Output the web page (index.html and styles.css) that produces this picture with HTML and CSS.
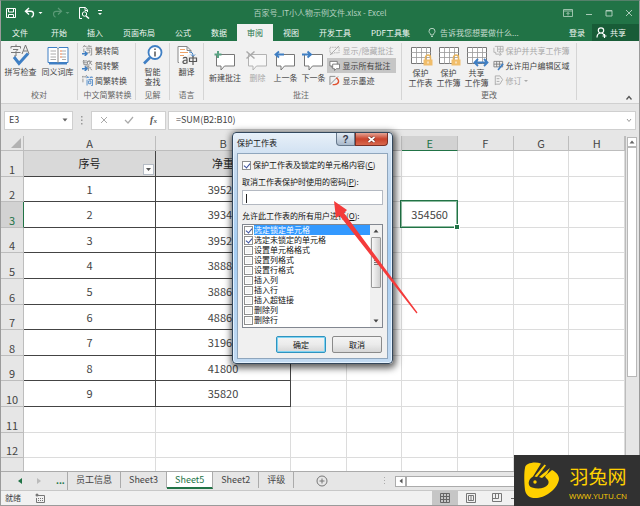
FILE: index.html
```html
<!DOCTYPE html>
<html lang="zh-CN">
<head>
<meta charset="utf-8">
<title>百家号_IT小人物示例文件.xlsx - Excel</title>
<link rel="stylesheet" href="styles.css">
</head>
<body>
<svg class="defs" aria-hidden="true">
  <symbol id="bubble" viewBox="0 0 24 22"><path d="M3.500 4.500h18v11.500h-10l-3.500 4v-4h-4.500z" fill="#fff" stroke="#777"/></symbol>
  <symbol id="sheet" viewBox="0 0 24 22"><path d="M2.500 2.500h19v16h-19z" fill="#fff" stroke="#777"/><path d="M2 7.500h20M2 12.500h20M7.500 2v17M12.500 2v17M17.500 2v17" stroke="#999" stroke-width=".8"/></symbol>
  <symbol id="lock" viewBox="0 0 10 12"><path d="M2.500 6V3.500a2.500 2.500 0 0 1 5 0V6" fill="none" stroke="#e8b45c" stroke-width="1.500"/><path d="M.5 5.500h9v6h-9z" fill="#f0bd6a"/><path d="M5 7.500v2" stroke="#fff"/></symbol>
</svg>
<div class="window">
  <header class="titlebar">
    <div class="quick">
      <button aria-label="保存"><svg width="12" height="12" viewBox="0 0 12 12" fill="none" stroke="#fff"><path d="M1.500 1.500h9v9h-9zM3.500 1.500v3.500h5V1.500M3.500 10.500V7.500h5v3"/></svg></button>
      <button aria-label="撤消"><svg width="20" height="12" viewBox="0 0 20 12" fill="none" stroke="#fff" stroke-width="1.400"><path d="M5 1 1.500 4.300 5 7.500M2 4.300h5c3 0 3.500 4.500.5 6"/><path d="M14.500 5h4l-2 2z" fill="#fff" stroke="none"/></svg></button>
      <button aria-label="恢复" disabled><svg width="20" height="12" viewBox="0 0 20 12" fill="none" stroke="#5b9a77" stroke-width="1.200"><path d="M7 1l3.500 3.300L7 7.500M10 4.300H5c-3 0-3.500 4.500-.5 6"/><path d="M14.500 5h4l-2 2z" fill="#5b9a77" stroke="none"/></svg></button>
      <button aria-label="打印预览"><svg width="12" height="12" viewBox="0 0 12 12" fill="none" stroke="#fff"><path d="M4 11.500H1.500v-11h6l2 2.500v2M7 1v2.500h2"/><circle cx="6.500" cy="7" r="2.200"/><path d="M8 9l3 2.500" stroke-width="1.500"/></svg></button>
      <button aria-label="自定义快速访问工具栏"><svg width="6" height="6" viewBox="0 0 6 6" fill="#fff"><path d="M1 0h4v1H1zM1 3h4L3 5z"/></svg></button>
    </div>
    <h1 class="title">百家号_IT小人物示例文件.xlsx - Excel</h1>
    <div class="winbuttons">
      <button aria-label="功能区显示选项"><svg width="10" height="8" viewBox="0 0 10 8" fill="none" stroke="#a9cbb7" stroke-width=".9"><path d="M.5.5h9v7h-9zM.5 2h9M5 6.500V3.500M3.500 5 5 3.500 6.500 5"/></svg></button>
      <button aria-label="最小化"><svg width="8" height="8" viewBox="0 0 8 8" stroke="#a9cbb7"><path d="M1 5.500h6"/></svg></button>
      <button aria-label="最大化"><svg width="8" height="8" viewBox="0 0 8 8" fill="none" stroke="#a9cbb7"><path d="M1 1.500h6v5.500H1zM1 2h6"/></svg></button>
      <button aria-label="关闭"><svg width="8" height="8" viewBox="0 0 8 8" stroke="#a9cbb7"><path d="m1 1 6 6M7 1 1 7"/></svg></button>
    </div>
  </header>
  <nav class="tabs">
    <button class="file">文件</button><button>开始</button><button>插入</button><button>页面布局</button><button>公式</button><button>数据</button><button class="active">审阅</button><button>视图</button><button>开发工具</button><button>PDF工具集</button>
    <button class="tell"><svg width="8" height="10" viewBox="0 0 8 10" fill="none" stroke="#c5dccf" stroke-width=".9"><path d="M2.800 7C2.800 5.500 1 5 1 3.300a3 3 0 0 1 6 0C7 5 5.200 5.500 5.200 7zM3 8.500h2"/></svg>告诉我您想要做什么...</button>
    <button class="login">登录</button>
    <button class="share"><svg width="11" height="11" viewBox="0 0 11 11" fill="none" stroke="#fff" stroke-width="1.200"><circle cx="5" cy="3.500" r="2.700"/><path d="M1 10.500c0-2.500 1-4 3-4.500M6 6c1 .5 1.500 1 2 2M8.500 7v4M6.500 9h4"/></svg>共享</button>
  </nav>

  <section class="ribbon" aria-label="审阅">
    <div class="group proof">
      <div class="tools">
        <button class="big wide"><svg viewBox="0 0 24 22"><g fill="none" stroke="#777"><path d="M7 .5v2M2 4.500v-2h9.500v2M4 5.500h5L7 7.500v4.500H5M2 8.500h9.500"/><path d="m13 10 3.500-9L20 10M14.500 7h4"/></g><path d="m5 13 5 6.500 9-10" fill="none" stroke="#3f7fc4" stroke-width="3"/></svg>拼写检查</button>
        <button class="big wide"><svg viewBox="0 0 24 22"><path d="M2 3.500h9l1 1 1-1h9v15H2z" fill="#fff" stroke="#3f7fc4"/><path d="M3 19.500h18" stroke="#3f7fc4" stroke-width="2"/><path d="M12 4v15" stroke="#888"/><path d="M4.500 7H10M4.500 10H10M4.500 13H10M4.500 15.500H10M16 7h4M16 10h4M16 13h4M16 15.500h4" stroke="#aaa"/><path d="M14 7h2M14 10h2M14 13h2" stroke="#e77c4b"/></svg>同义词库</button>
      </div>
      <h2>校对</h2>
    </div>
    <div class="group convert">
      <div class="tools small">
        <button><svg viewBox="0 0 12 12" fill="none" stroke="#888" stroke-width=".9"><path d="M3 0 1 2.500M2.500 1.500H5M8 0 6 2.500M7.500 1.500h3M2 4v4M4.500 3.500h6V11H9M5 5.500h3.500v3H5"/><path d="M0 9.500h5M3 7l2.500 2.500L3 12" stroke="#3f7fc4" stroke-width="1.600"/></svg>繁转简</button>
        <button><svg viewBox="0 0 12 12" fill="none" stroke="#888" stroke-width=".9"><path d="M2 0 1 1.500M1.500 1h4M1 3h5M2 1v4h4V1M8 0 7 2M7 1.500h4M8 2l3 3.500M10 2 7 5.500M3 6.500h5L4 8.500h6M7 8.500V12M9 9.500l2 1.500"/><path d="M0 9.500h5M3 7l2.500 2.500L3 12" stroke="#3f7fc4" stroke-width="1.600"/></svg>简转繁</button>
        <button><svg viewBox="0 0 12 12" fill="none" stroke="#888" stroke-width=".9"><path d="M1 1 0 3M1 2h3M5 0 4 2.500M1 4v4"/><path d="M6 1.500 5 3.500M5.500 2.500H8M10 1.500 9 3.500M9.500 2.500H12M5.500 5v6.500M7 5h4.500v6.500H10M7.200 6.500h2.500v3H7.200z" stroke="#3f7fc4"/></svg>简繁转换</button>
      </div>
      <h2>中文简繁转换</h2>
    </div>
    <div class="group narrow">
      <div class="tools"><button class="big"><svg viewBox="0 0 24 22"><circle cx="14" cy="8.500" r="6.500" fill="#fff" stroke="#3f7fc4" stroke-width="1.800"/><path d="m9 13.500-6 6" stroke="#3f7fc4" stroke-width="2.600"/><path d="M14 4.500v1.500M14 7.500v5" stroke="#555" stroke-width="1.500"/></svg>智能<br>查找</button></div>
      <h2>见解</h2>
    </div>
    <div class="group narrow">
      <div class="tools"><button class="big"><svg viewBox="0 0 24 22"><path d="M4 18.500H3v-16h9l4 4v2M12 2.500v4h4" fill="#fff" stroke="#888"/><path d="M5 5.500h5M5 8.500h8M5 11.500h4" stroke="#eda36a"/><path d="M14 8c3 0 4 1 4 4m-2-1.500 2 2 2-2" fill="none" stroke="#3f7fc4"/><path d="M8 14.500c1-1.500 4-1.500 4 .5v4.500m0-3.500c-5 0-5 3.500-2 3.500 1.200 0 2-.8 2-1.500M14.500 14h7v3.500h-7zM18 12v9" fill="none" stroke="#555" stroke-width="1.200"/></svg>翻译</button></div>
      <h2>语言</h2>
    </div>
    <div class="group comments">
      <div class="tools">
        <button class="big wide"><svg viewBox="0 0 24 22"><use href="#bubble"/><path d="M5 1v7M1.500 4.500h7" stroke="#5aa383" stroke-width="2"/></svg>新建批注</button>
        <button class="big" disabled><svg viewBox="0 0 24 22"><use href="#bubble" opacity=".5"/><path d="m1.500 1.500 8 7m0-7-8 7" stroke="#aaa" stroke-width="1.500"/></svg>删除</button>
        <button class="big"><svg viewBox="0 0 24 22"><use href="#bubble"/><path d="M11 4.500H3M6 1.500l-3.500 3L6 7.500" fill="none" stroke="#3f7fc4" stroke-width="1.800"/></svg>上一条</button>
        <button class="big"><svg viewBox="0 0 24 22"><use href="#bubble"/><path d="M1 4.500h8M6.500 1.500l3.500 3-3.500 3" fill="none" stroke="#3f7fc4" stroke-width="1.800"/></svg>下一条</button>
        <div class="small">
          <button disabled><svg viewBox="0 0 12 12" fill="none" stroke="#aaa"><path d="M1 2.500h10v6H5L3 10.500v-2H1z" stroke-dasharray="1.500 1"/><path d="m1 11 10-10"/></svg>显示/隐藏批注</button>
          <button class="on" aria-pressed="true"><svg viewBox="0 0 12 12" fill="#fff" stroke="#777"><path d="M1 1.500h8v5H5L3 8V6.500H1z"/><path d="M4 4.500h7.500v5H8l-2 2v-2H4z"/></svg>显示所有批注</button>
          <button><svg viewBox="0 0 12 12" fill="none" stroke="#888"><path d="M1 10.500v-9h6M1 10.500l9-9"/><path d="M8 3c4 3 3 7-2 7.500H4" stroke="#e0502f" stroke-width="1.500"/></svg>显示墨迹</button>
        </div>
      </div>
      <h2>批注</h2>
    </div>
    <div class="group changes">
      <div class="tools">
        <button class="big"><svg viewBox="0 0 24 22"><use href="#sheet"/><use href="#lock" x="14" y="9" width="10" height="12"/></svg>保护<br>工作表</button>
        <button class="big"><svg viewBox="0 0 24 22"><use href="#sheet"/><use href="#lock" x="14" y="9" width="10" height="12"/></svg>保护<br>工作簿</button>
        <button class="big"><svg viewBox="0 0 24 22"><use href="#sheet"/><path d="M10 17.500h12M13 14l-3.500 3.500L13 21M19 14l3.500 3.500L19 21" fill="none" stroke="#3f7fc4" stroke-width="1.800"/></svg>共享<br>工作簿</button>
        <div class="small">
          <button disabled><svg viewBox="0 0 12 12" fill="none" stroke="#aaa" stroke-width=".9"><path d="M2 1.500h9v6H6M5 1.500v6M8 1.500v6M5 4.500h6M1 3v5h2v2h6M7 8l2 2-2 2"/></svg>保护并共享工作簿</button>
          <button><svg viewBox="0 0 12 12" fill="none" stroke="#777" stroke-width=".9"><path d="M1 1.500h9.500v6H1zM1 4.500h9.500M4 1.500v6M7 1.500v6"/><path d="m5.500 11 5.500-7" stroke="#3f7fc4" stroke-width="1.800"/></svg>允许用户编辑区域</button>
          <button disabled><svg viewBox="0 0 12 12" fill="none" stroke="#aaa"><path d="M2.500 11V1h5l3 4-3 5h-5M4 4h3M4 7h3"/></svg>修订 <svg class="caret" viewBox="0 0 4 4" fill="#aaa"><path d="M0 1h4L2 3z"/></svg></button>
        </div>
      </div>
      <h2>更改</h2>
    </div>
    <button class="collapse" aria-label="折叠功能区"><svg width="8" height="6" viewBox="0 0 8 6" fill="none" stroke="#555" stroke-width="1.300"><path d="m1.500 4.500 2.500-3 2.500 3"/></svg></button>
  </section>

  <div class="formulabar">
    <div class="namebox"><input aria-label="名称框" value="E3"><svg width="6" height="4" viewBox="0 0 6 4" fill="#666"><path d="M.5.5h5L3 3.500z"/></svg></div>
    <svg class="dots" width="2" height="10" viewBox="0 0 2 10" fill="#999"><path d="M0 1h1.500v1.500H0zM0 4.500h1.500V6H0zM0 8h1.500v1.500H0z"/></svg>
    <div class="fx">
      <button aria-label="取消"><svg width="8" height="8" viewBox="0 0 8 8" stroke="#aaa"><path d="m1 1 6 6M7 1 1 7"/></svg></button>
      <button aria-label="输入"><svg width="10" height="8" viewBox="0 0 10 8" fill="none" stroke="#aaa" stroke-width="1.200"><path d="m1 4 3 3 5-6"/></svg></button>
      <button aria-label="插入函数" class="fn">f<small>x</small></button>
    </div>
    <div class="formula"><input aria-label="编辑栏" value="=SUM(B2:B10)"><svg width="6" height="5" viewBox="0 0 6 5" fill="none" stroke="#999"><path d="m1 1 2 2.500L5 1"/></svg></div>
  </div>

  <main class="sheet">
    <div class="cells">
      <table>
        <colgroup><col class="c-row"><col class="c-a"><col class="c-b"><col><col><col><col><col><col></colgroup>
        <thead><tr><th class="corner"><svg width="10" height="10" viewBox="0 0 10 10"><path d="M10 0v10H0z" fill="#b2b2b2"/></svg></th><th>A</th><th>B</th><th>C</th><th>D</th><th class="sel">E</th><th>F</th><th>G</th><th>H</th></tr></thead>
        <tbody>
          <tr class="data head"><th>1</th><td>序号<button class="filter" aria-label="筛选"></button></td><td>净重</td><td></td><td></td><td></td><td></td><td></td><td></td></tr>
          <tr class="data"><th>2</th><td>1</td><td>39520</td><td></td><td></td><td></td><td></td><td></td><td></td></tr>
          <tr class="data"><th class="sel">3</th><td>2</td><td>39340</td><td></td><td></td><td class="current">354560</td><td></td><td></td><td></td></tr>
          <tr class="data"><th>4</th><td>3</td><td>39520</td><td></td><td></td><td></td><td></td><td></td><td></td></tr>
          <tr class="data"><th>5</th><td>4</td><td>38880</td><td></td><td></td><td></td><td></td><td></td><td></td></tr>
          <tr class="data"><th>6</th><td>5</td><td>38860</td><td></td><td></td><td></td><td></td><td></td><td></td></tr>
          <tr class="data"><th>7</th><td>6</td><td>48860</td><td></td><td></td><td></td><td></td><td></td><td></td></tr>
          <tr class="data"><th>8</th><td>7</td><td>31960</td><td></td><td></td><td></td><td></td><td></td><td></td></tr>
          <tr class="data"><th>9</th><td>8</td><td>41800</td><td></td><td></td><td></td><td></td><td></td><td></td></tr>
          <tr class="data"><th>10</th><td>9</td><td>35820</td><td></td><td></td><td></td><td></td><td></td><td></td></tr>
          <tr><th>11</th><td></td><td></td><td></td><td></td><td></td><td></td><td></td><td></td></tr>
          <tr><th>12</th><td></td><td></td><td></td><td></td><td></td><td></td><td></td><td></td></tr>
          <tr><th></th><td></td><td></td><td></td><td></td><td></td><td></td><td></td><td></td></tr>
        </tbody>
      </table>
    </div>
    <div class="vscroll"><div class="up"><svg width="6" height="4" viewBox="0 0 6 4" fill="#666"><path d="M.5 3.500h5L3 .5z"/></svg></div><div class="thumb"></div></div>
  </main>

  <nav class="sheettabs">
    <div class="arrows">
      <button aria-label="上一个"><svg width="4" height="6" viewBox="0 0 4 6" fill="#217346"><path d="M4 0v6L0 3z"/></svg></button>
      <button aria-label="下一个" disabled><svg width="4" height="6" viewBox="0 0 4 6" fill="#bbb"><path d="M0 0v6l4-3z"/></svg></button>
      <button class="more">...</button>
    </div>
    <button class="tab">员工信息</button><button class="tab">Sheet3</button><button class="tab active">Sheet5</button><button class="tab">Sheet2</button><button class="tab">评级</button>
    <button class="add" aria-label="新工作表"><svg width="12" height="12" viewBox="0 0 12 12" fill="none" stroke="#777"><circle cx="6" cy="6" r="5"/><path d="M6 3.500v5M3.500 6h5"/></svg></button>
    <div class="hscroll"><svg width="2" height="8" viewBox="0 0 2 8" fill="#aaa"><path d="M0 0h1v1H0zM0 3h1v1H0zM0 6h1v1H0z"/></svg><div class="left"><svg width="4" height="6" viewBox="0 0 4 6" fill="#555"><path d="M3.500.5v5L.5 3z"/></svg></div><div class="track"></div></div>
  </nav>
  <footer class="status">
    <span>就绪</span>
    <svg width="10" height="10" viewBox="0 0 10 10" fill="none" stroke="#777"><path d="M3 2.500h6.500v7h-8V5M3 5.500h1M5 5.500h1M7 5.500h1M3 7.500h1M5 7.500h1M7 7.500h1"/><circle cx="2" cy="2" r="1.500" fill="#777" stroke="none"/></svg>
    <div class="views">
      <button class="on" aria-label="普通"><svg width="10" height="10" viewBox="0 0 10 10" fill="none" stroke="#666"><path d="M.5.5h9v9h-9zM.5 3.500h9M.5 6.500h9M3.500.5v9M6.500.5v9"/></svg></button>
      <button aria-label="页面布局"><svg width="10" height="10" viewBox="0 0 10 10" fill="none" stroke="#777"><path d="M.5.500h9v9h-9zM2.500 2.500h5v5h-5zM4 4h2M4 6h2"/></svg></button>
      <button aria-label="分页预览"><svg width="10" height="10" viewBox="0 0 10 10" fill="none" stroke="#777"><path d="M.5.5h9v8h-9zM.5 5.500h6V.5M3.500.5v5"/></svg></button>
      <button class="zoomout" aria-label="缩小"><svg width="6" height="6" viewBox="0 0 6 6" stroke="#666"><path d="M0 3.500h6"/></svg></button>
    </div>
  </footer>
</div>

<div class="dialog" role="dialog" aria-labelledby="dlg-title">
  <div class="dlg-head">
    <h2 id="dlg-title">保护工作表</h2>
    <button class="help" aria-label="帮助">?</button><button class="close" aria-label="关闭"><svg width="9" height="7" viewBox="0 0 9 7" fill="none"><path d="m1.500 1 6 5m0-5-6 5" stroke="#6b2a22" stroke-width="3"/><path d="m1.500 1 6 5m0-5-6 5" stroke="#fff" stroke-width="1.700"/></svg></button>
  </div>
  <form class="dlg-body">
    <label class="main-check"><input type="checkbox" checked><span>保护工作表及锁定的单元格内容(<u>C</u>)</span></label>
    <label class="line" for="pw">取消工作表保护时使用的密码(<u>P</u>):</label>
    <input id="pw" class="pw" type="password">
    <p class="line">允许此工作表的所有用户进行(<u>O</u>):</p>
    <div class="list">
      <div class="options">
        <label class="hot"><input type="checkbox" checked><span>选定锁定单元格</span></label>
        <label><input type="checkbox" checked><span>选定未锁定的单元格</span></label>
        <label><input type="checkbox"><span>设置单元格格式</span></label>
        <label><input type="checkbox"><span>设置列格式</span></label>
        <label><input type="checkbox"><span>设置行格式</span></label>
        <label><input type="checkbox"><span>插入列</span></label>
        <label><input type="checkbox"><span>插入行</span></label>
        <label><input type="checkbox"><span>插入超链接</span></label>
        <label><input type="checkbox"><span>删除列</span></label>
        <label><input type="checkbox"><span>删除行</span></label>
      </div>
      <div class="bar">
        <svg width="6" height="4" viewBox="0 0 6 4" fill="#444"><path d="M.5 3.500h5L3 .5z"/></svg>
        <div class="grip"><svg width="5" height="6" viewBox="0 0 5 6" stroke="#777"><path d="M0 .5h5M0 2.500h5M0 4.500h5"/></svg></div>
        <svg class="down" width="6" height="4" viewBox="0 0 6 4" fill="#444"><path d="M.5.5h5L3 3.500z"/></svg>
      </div>
    </div>
    <div class="actions"><button type="button" class="ok">确定</button><button type="button">取消</button></div>
  </form>
</div>

<svg class="arrow" width="86" height="114" viewBox="0 0 86 114" aria-hidden="true"><path d="M1 0 14 9 11 12 84.500 111.500 83.500 112.500 6.500 14.500 3 17z" fill="#f43b3b"/></svg>

<aside class="brand">
  <svg width="36" height="37" viewBox="0 0 36 37" fill="#ffd000"><path d="M4 2C8 0 13 0 17 1.500L9 14.500C4 17 3 24 8 25.500c6 2 13 1 16-3 1.500-3 0-5-2-6.500l-1-2 7-6c4 2 7 5 7 9-1 9-12 18-22 19C5 36.500 2 33 1 28 0 20 0 10 1 6c0-2 1-3 3-4z"/><path d="m10.500 14.500 10-12 1.500 1-9 11.500zM15 15l11-9-3 6-5 4z"/><circle cx="11" cy="20" r="1.700"/></svg>
  <div class="brand-text"><strong>羽兔网</strong><span>WWW.YUTU.CN</span></div>
</aside>
</body>
</html>
```
FILE: styles.css
```css
* { box-sizing: border-box; }
body {
  margin: 0;
  color: #444;
  font: 8px/10px "Noto Sans CJK SC", sans-serif;
  overflow: hidden;
}
button, input { font: inherit; color: inherit; margin: 0; padding: 0; border: 0; background: none; }
input { outline: 0; min-width: 0; }
button { white-space: nowrap; }
h1, h2, p { margin: 0; font-size: 8px; font-weight: 400; }
svg { display: block; flex: none; }
.defs { position: absolute; width: 0; height: 0; }

.window { display: flex; flex-direction: column; height: 100vh; border: 1px solid #9b9b9b; border-top-color: #55806a; background: #e6e6e6; }

/* Title bar */
.titlebar { display: grid; grid-template-columns: 1fr auto 1fr; align-items: center; height: 23px; background: #217346; color: #b4d0c0; }
.quick { display: flex; align-items: center; gap: 7px; padding-left: 4px; }
.title { line-height: 14px; }
.winbuttons { display: flex; justify-content: flex-end; align-items: center; gap: 12px; padding-right: 6px; }

/* Ribbon tabs */
.tabs { display: flex; height: 17px; background: #217346; color: #f0f7f3; }
.tabs button { padding: 0 10px; display: flex; align-items: center; }
.tabs .file { padding: 0 13px 0 11px; }
.tabs .active { background: #f1f1f1; color: #217346; }
.tabs .tell { gap: 4px; padding: 0 8px; color: #c5dccf; }
.tabs .login { margin-left: auto; padding: 0 7px; }
.tabs .share { gap: 3px; padding: 0 13px 0 4px; background: #185c37; }

/* Ribbon */
.ribbon { display: flex; height: 63px; padding-top: 2px; background: #f1f1f1; border-bottom: 1px solid #d0d0d0; }
.group { display: flex; flex-direction: column; justify-content: space-between; margin-bottom: 3px; border-right: 1px solid #d5d5d5; }
.group h2 { color: #666; text-align: center; line-height: 10px; white-space: nowrap; }
.tools { display: flex; justify-content: center; }
.big { width: 28px; display: block; text-align: center; line-height: 10px; }
.big svg { width: 24px; height: 22px; margin: 1px auto 1px; }
.wide { width: 37px; }
.small { display: flex; flex-direction: column; }
.small button { display: flex; align-items: center; gap: 2px; height: 15px; padding: 0 2px; }
.small svg { width: 11px; height: 11px; }
.small .caret { width: 4px; height: 4px; }
.small .on { background: #c6c6c6; }
.ribbon button:disabled { color: #a8a8a8; }
.proof { width: 77px; }
.convert { width: 58px; padding-left: 2px; }
.narrow { width: 34px; }
.comments { width: 198px; padding-right: 3px; }
.changes { width: 175px; }
.collapse { margin: auto 6px 2px auto; }

/* Formula bar */
.formulabar { display: flex; align-items: center; height: 32px; padding: 0 3px; font-size: 9px; line-height: 14px; }
.namebox, .fx, .formula { display: flex; align-items: center; height: 19px; background: #fff; border: 1px solid #cfcfcf; }
.namebox { width: 69px; padding: 0 4px; }
.namebox input, .formula input { flex: 1; }
.dots { margin: 0 8px; }
.fx { width: 75px; justify-content: space-around; margin-right: 2px; }
.fn { font: italic bold 10px/12px "Liberation Serif", serif; color: #555; }
.fn small { font-size: 7px; }
.formula { flex: 1; padding: 0 3px 0 7px; }

/* Worksheet */
.sheet { display: flex; flex: 1; min-height: 0; }
.cells { flex: 1; min-width: 0; overflow: hidden; background: #fff; border-right: 1px solid #bcbcbc; }
table { width: 100%; table-layout: fixed; border-collapse: separate; border-spacing: 0; font-size: 11px; line-height: 13px; }
.c-row { width: 23px; }
.c-a { width: 132px; }
.c-b { width: 135px; }
th, td { padding: 0; text-align: center; font-weight: 400; border: solid #dcdcdc; border-width: 0 1px 1px 0; }
th { background: #e6e6e6; border-color: #bdbdbd; }
thead tr { height: 15px; }
tbody tr { height: 26px; }
tbody tr:nth-child(2), tbody tr:nth-child(4), tbody tr:nth-child(7), tbody tr:nth-child(9), tbody tr:nth-child(12) { height: 25px; }
tbody th { vertical-align: bottom; }
.corner svg { margin-left: auto; margin-right: 2px; }
.sel { background: #d2d2d2; color: #217346; }
thead .sel { border-bottom-color: #217346; }
tbody .sel { border-right-color: #217346; }
.data td:nth-child(2), .data td:nth-child(3) { border-color: #444; }
.head td:nth-child(2), .head td:nth-child(3) { background: #d9d9d9; color: #222; }
.head td { position: relative; }
.filter { position: absolute; right: 1px; bottom: 1px; width: 11px; height: 11px; background: #fcfcfc; border: 1px solid #b5bcc5; }
.filter::after { content: ""; display: block; width: 5px; height: 3px; margin: auto; background: #555; clip-path: polygon(0 0, 100% 0, 50% 100%); }
.current { position: relative; }
.current::before { content: ""; position: absolute; inset: -2px -1px -1px -2px; border: 1px solid #217346; box-shadow: inset 0 0 0 1px #8ebca1; }
.current::after { content: ""; position: absolute; right: -2px; bottom: -2px; width: 4px; height: 4px; background: #217346; outline: 1px solid #fff; }
.vscroll { display: flex; flex-direction: column; width: 13px; padding: 1px 2px 0 1px; }
.up { display: grid; place-items: center; height: 10px; background: #fff; border: 1px solid #b8b8b8; }
.thumb { height: 230px; background: #fff; border: 1px solid #b8b8b8; }

/* Sheet tabs */
.sheettabs { display: flex; height: 19px; border-top: 1px solid #ababab; font-size: 9px; line-height: 14px; }
.arrows { display: flex; align-items: center; gap: 15px; width: 67px; padding-left: 17px; border-right: 1px solid #ababab; }
.more { color: #217346; font-weight: 700; }
.tab { height: 16px; margin-bottom: 2px; padding: 0 8px; border-right: 1px solid #ababab; }
.tab.active { background: #fff; color: #217346; border-bottom: 2px solid #217346; height: 17px; }
.add { padding: 0 22px; }
.hscroll { display: flex; flex: 1; max-width: 255px; margin-left: auto; align-items: center; }
.left, .track { display: grid; place-items: center; height: 11px; border: 1px solid #ababab; background: #fff; }
.left { width: 11px; margin-left: 9px; }
.track { flex: 1; }

/* Status bar */
.status { display: flex; align-items: center; gap: 14px; height: 15px; padding-left: 4px; background: #f1f1f1; border-top: 1px solid #c8c8c8; }
.views { display: flex; align-self: stretch; margin-left: auto; padding-right: 121px; }
.views button { display: grid; place-items: center; width: 26px; }
.views .on { background: #c6c6c6; }
.views .zoomout { width: 8px; }

/* Protect-sheet dialog */
.dialog { position: absolute; left: 232px; top: 132px; width: 161px; padding: 0 4px 4px; border: 1px solid #33475c; border-radius: 4px; background: linear-gradient(#e8f0f8, #c9dcf0 12%, #a5cdf3 50%, #c2daf2); box-shadow: inset 0 0 0 1px #e4f2ff, 1px 2px 7px 2px rgba(0, 0, 0, .65); color: #111; }
.dlg-head { display: flex; align-items: flex-start; height: 20px; }
.dlg-head h2 { flex: 1; line-height: 19px; }
.help, .close { display: grid; place-items: center; height: 13px; border: 1px solid #66788c; border-top: 0; }
.help { width: 19px; border-radius: 0 0 0 4px; background: linear-gradient(#dfe8f2, #a9b9cb); color: #334; font: bold 10px/11px "Liberation Sans", sans-serif; }
.close { width: 33px; border-color: #7a3026; border-radius: 0 0 4px 0; background: linear-gradient(#e4a494, #c9432c 50%, #d8694f); }
.dlg-body { padding: 5px 4px; background: #f0f0f0; border: 1px solid #8fa6bd; }
.dialog label { display: flex; align-items: center; white-space: nowrap; }
.dialog label span, .line { line-height: 12px; }
.main-check { height: 12px; gap: 2px; }
.dialog .line { display: block; margin-top: 5px; white-space: nowrap; }
.dialog input[type="checkbox"] { appearance: none; flex: none; width: 9px; height: 9px; border: 1px solid #8e8f8f; background: #f4f4f4; box-shadow: inset 0 0 0 1px #fff; }
.dialog input:checked { background: #fff; }
.dialog input:checked::after { content: ""; display: block; width: 3px; height: 5px; margin: 0 2px; border: solid #3a4f9c; border-width: 0 1px 1px 0; transform: rotate(40deg); }
.pw { display: block; width: 100%; height: 15px; margin-top: 2px; border: 1px solid #b4b9c2; background: linear-gradient(#222, #222) 3px 3px / 1px 9px no-repeat #fff; }
.list { display: flex; margin-top: 2px; height: 104px; border: 1px solid #828790; background: #fff; }
.options { flex: 1; padding-left: 1px; }
.options label { height: 10px; gap: 1px; }
.options .hot span { flex: 1; line-height: 10px; background: #3399ff; color: #fff; }
.bar { display: flex; flex-direction: column; align-items: center; width: 12px; padding: 4px 1px; background: #f0f0f0; gap: 4px; }
.grip { display: grid; place-items: center; width: 10px; height: 51px; border: 1px solid #999; border-radius: 1px; background: linear-gradient(90deg, #f8f8f8, #cfcfcf); }
.down { margin-top: auto; }
.actions { display: flex; justify-content: flex-end; gap: 6px; padding: 8px 1px 0 0; }
.actions button { width: 50px; height: 17px; border: 1px solid #8a8a8a; border-radius: 2px; background: linear-gradient(#f4f4f4, #ebebeb 50%, #d6d6d6); }
.actions .ok { border-color: #2f93bf; box-shadow: inset 0 0 0 1px #7fd3f2; }

.arrow { position: absolute; left: 333px; top: 201px; }

/* Site watermark */
.brand { position: absolute; right: 0; bottom: 0; display: flex; align-items: center; gap: 9px; padding: 0 13px 0 10px; height: 51px; background: #313131; color: #ffd000; }
.brand-text { display: flex; flex-direction: column; align-items: center; padding-top: 2px; }
.brand strong { font-size: 19px; line-height: 28px; font-weight: 400; }
.brand span { font: 8px/12px "Open Sans", sans-serif; }
```
